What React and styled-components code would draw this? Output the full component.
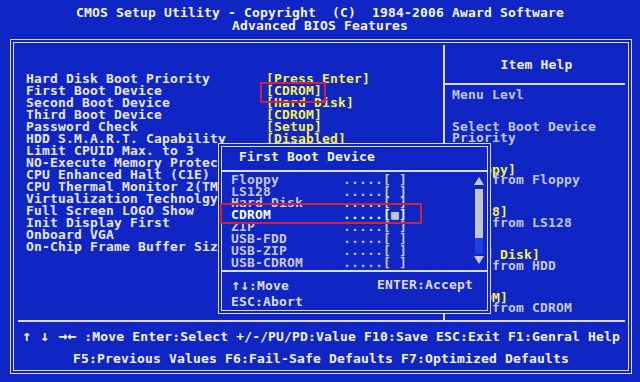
import React from "react";
import styled, { createGlobalStyle } from "styled-components";

const BLUE = "#1026c4";
const LINE = "#dcdce6";

const GlobalStyle = createGlobalStyle`
  html, body {
    margin: 0;
    padding: 0;
    background: ${BLUE};
  }
`;

const settings = [
  ["Hard Disk Boot Priority", "[Press Enter]"],
  ["First Boot Device", "[CDROM]"],
  ["Second Boot Device", "[Hard Disk]"],
  ["Third Boot Device", "[CDROM]"],
  ["Password Check", "[Setup]"],
  ["HDD S.M.A.R.T. Capability", "[Disabled]"],
  ["Limit CPUID Max. to 3", ""],
  ["NO-Execute Memory Protect", ""],
  ["CPU Enhanced Halt (C1E)", ""],
  ["CPU Thermal Monitor 2(TM2)", ""],
  ["Virtualization Technolgy", ""],
  ["Full Screen LOGO Show", ""],
  ["Init Display First", ""],
  ["Onboard VGA", ""],
  ["On-Chip Frame Buffer Size", ""],
];

const helpLines = [
  ["Menu Levl", false],
  ["", false],
  ["", false],
  ["Select Boot Device", false],
  ["Priority", false],
  ["", false],
  ["", false],
  ["[Floppy]", true],
  ["Boot from Floppy", false],
  ["", false],
  ["", false],
  ["[LS128]", true],
  ["Boot from LS128", false],
  ["", false],
  ["", false],
  ["[Hard Disk]", true],
  ["Boot from HDD", false],
  ["", false],
  ["", false],
  ["[CDROM]", true],
  ["Boot from CDROM", false],
];

const devices = ["Floppy", "LS128", "Hard Disk", "CDROM", "ZIP", "USB-FDD", "USB-ZIP", "USB-CDROM"];

function App() {
  return (
    <Screen>
      <GlobalStyle />
      <Header>
        <div>CMOS Setup Utility - Copyright  (C)  1984-2006 Award Software</div>
        <div>Advanced BIOS Features</div>
      </Header>

      <Frame>
        <Main>
          <SettingsPanel>
            {settings.map(([label, value]) => (
              <SettingRow key={label}>
                <span>{label}</span>
                <Value>{value}</Value>
              </SettingRow>
            ))}
          </SettingsPanel>
          <Divider />
          <HelpPanel>
            <HelpTitle>Item Help</HelpTitle>
            <HelpRule />
            <HelpBody>
              {helpLines.map(([text, option], i) => (
                <HelpLine key={i} $option={option}>
                  {text || "\u00a0"}
                </HelpLine>
              ))}
            </HelpBody>
          </HelpPanel>
        </Main>
        <FooterRule />
        <Footer>
          <div>
            <Arrows>↑ ↓ →←</Arrows> :Move Enter:Select +/-/PU/PD:Value F10:Save ESC:Exit F1:Genral Help
          </div>
          <div>F5:Previous Values F6:Fail-Safe Defaults F7:Optimized Defaults</div>
        </Footer>
      </Frame>

      <Popup>
        <PopupTitle>First Boot Device</PopupTitle>
        <PopupRule />
        <PopupBody>
          <DeviceList>
            {devices.map((d) => (
              <DeviceRow key={d} $selected={d === "CDROM"}>
                {d.padEnd(14) + ".....["}
                <Mark>{d === "CDROM" ? "■" : " "}</Mark>]
              </DeviceRow>
            ))}
          </DeviceList>
          <Scrollbar>
            <svg width="10" height="8" viewBox="0 0 10 8">
              <polygon points="5,0 10,8 0,8" fill="#c8c8d0" />
            </svg>
            <Thumb />
            <Track />
            <svg width="10" height="8" viewBox="0 0 10 8">
              <polygon points="0,0 10,0 5,8" fill="#c8c8d0" />
            </svg>
          </Scrollbar>
        </PopupBody>
        <PopupRule />
        <PopupFooter>
          <span>
            <Arrows>↑↓</Arrows>:Move
          </span>
          <span>ENTER:Accept</span>
          <span>ESC:Abort</span>
        </PopupFooter>
      </Popup>

      <Highlight $x={260} $y={82} $w={66} $h={21} />
      <Highlight $x={220} $y={203} $w={202} $h={21} />
    </Screen>
  );
}

const Screen = styled.div`
  position: relative;
  width: 640px;
  height: 382px;
  overflow: hidden;
  background: ${BLUE};
  font-family: "DejaVu Sans Mono", "Liberation Mono", monospace;
  font-weight: bold;
  font-size: 13px;
  letter-spacing: 0.17px;
  color: #e6e6ee;
`;

const Header = styled.header`
  box-sizing: border-box;
  height: 39px;
  padding-top: 7px;
  line-height: 12.5px;
  text-align: center;
  white-space: pre;
  color: #f4f4f4;
`;

const Frame = styled.div`
  box-sizing: border-box;
  margin-left: 10px;
  width: 622px;
  height: 335px;
  border: 4px double ${LINE};
  display: flex;
  flex-direction: column;
`;

const Main = styled.div`
  display: flex;
  height: 277px;
`;

const SettingsPanel = styled.div`
  box-sizing: border-box;
  width: 429px;
  padding: 30px 0 0 12px;
`;

const SettingRow = styled.div`
  display: grid;
  grid-template-columns: 240px auto;
  line-height: 12px;
  white-space: pre;
`;

const Value = styled.span`
  color: #f2f052;
`;

const Divider = styled.div`
  width: 2px;
  margin-top: 2px;
  background: ${LINE};
`;

const HelpPanel = styled.div`
  flex: 1;
  display: flex;
  flex-direction: column;
`;

const HelpTitle = styled.div`
  height: 40px;
  display: flex;
  align-items: center;
  justify-content: center;
  padding-top: 2px;
  box-sizing: border-box;
  color: #eeeef4;
`;

const HelpRule = styled.div`
  height: 2px;
  margin-right: 3px;
  background: ${LINE};
`;

const HelpBody = styled.div`
  padding: 5px 0 0 7px;
`;

const HelpLine = styled.div`
  line-height: 10.67px;
  white-space: pre;
  color: ${(p) => (p.$option ? "#f2f052" : "#c2c6dc")};
`;

const FooterRule = styled.div`
  height: 2px;
  margin: 0 3px 0 4px;
  background: ${LINE};
`;

const Footer = styled.div`
  padding-top: 3px;
  line-height: 22px;
  text-align: center;
  white-space: pre;
  color: #f2f2f6;
`;

const Arrows = styled.span`
  font-size: 15px;
  letter-spacing: 0;
`;

const Popup = styled.div`
  position: absolute;
  left: 218px;
  top: 143px;
  width: 273px;
  height: 171px;
  box-sizing: border-box;
  border: 4px double ${LINE};
  background: ${BLUE};
  display: flex;
  flex-direction: column;
`;

const PopupTitle = styled.div`
  height: 23px;
  box-sizing: border-box;
  padding: 4px 0 0 17px;
  line-height: 12px;
  color: #f2f2f6;
`;

const PopupRule = styled.div`
  height: 2px;
  background: ${LINE};
`;

const PopupBody = styled.div`
  height: 100px;
  display: flex;
  justify-content: space-between;
  padding: 2px 3px 0 9px;
  box-sizing: border-box;
`;

const DeviceList = styled.div`
  display: flex;
  flex-direction: column;
`;

const DeviceRow = styled.div`
  line-height: 11.9px;
  white-space: pre;
  color: ${(p) => (p.$selected ? "#ffffff" : "#c8c8d4")};
`;

const Mark = styled.span`
  color: #c4c4cc;
`;

const Scrollbar = styled.div`
  width: 10px;
  display: flex;
  flex-direction: column;
  align-items: center;
  padding-top: 3px;

  svg {
    display: block;
  }
`;

const Thumb = styled.div`
  width: 8px;
  height: 49px;
  margin-top: 4px;
  background: #c4c4cc;
`;

const Track = styled.div`
  width: 8px;
  height: 16px;
  margin-bottom: 2px;
  background: #1c40e4;
`;

const PopupFooter = styled.div`
  display: grid;
  grid-template-columns: 146px auto;
  padding: 5px 0 0 9px;
  line-height: 16px;
  white-space: pre;
  color: #dcdce4;
`;

const Highlight = styled.div`
  position: absolute;
  left: ${(p) => p.$x}px;
  top: ${(p) => p.$y}px;
  width: ${(p) => p.$w}px;
  height: ${(p) => p.$h}px;
  box-sizing: border-box;
  border: 2px solid #d0203c;
`;

export default App;
